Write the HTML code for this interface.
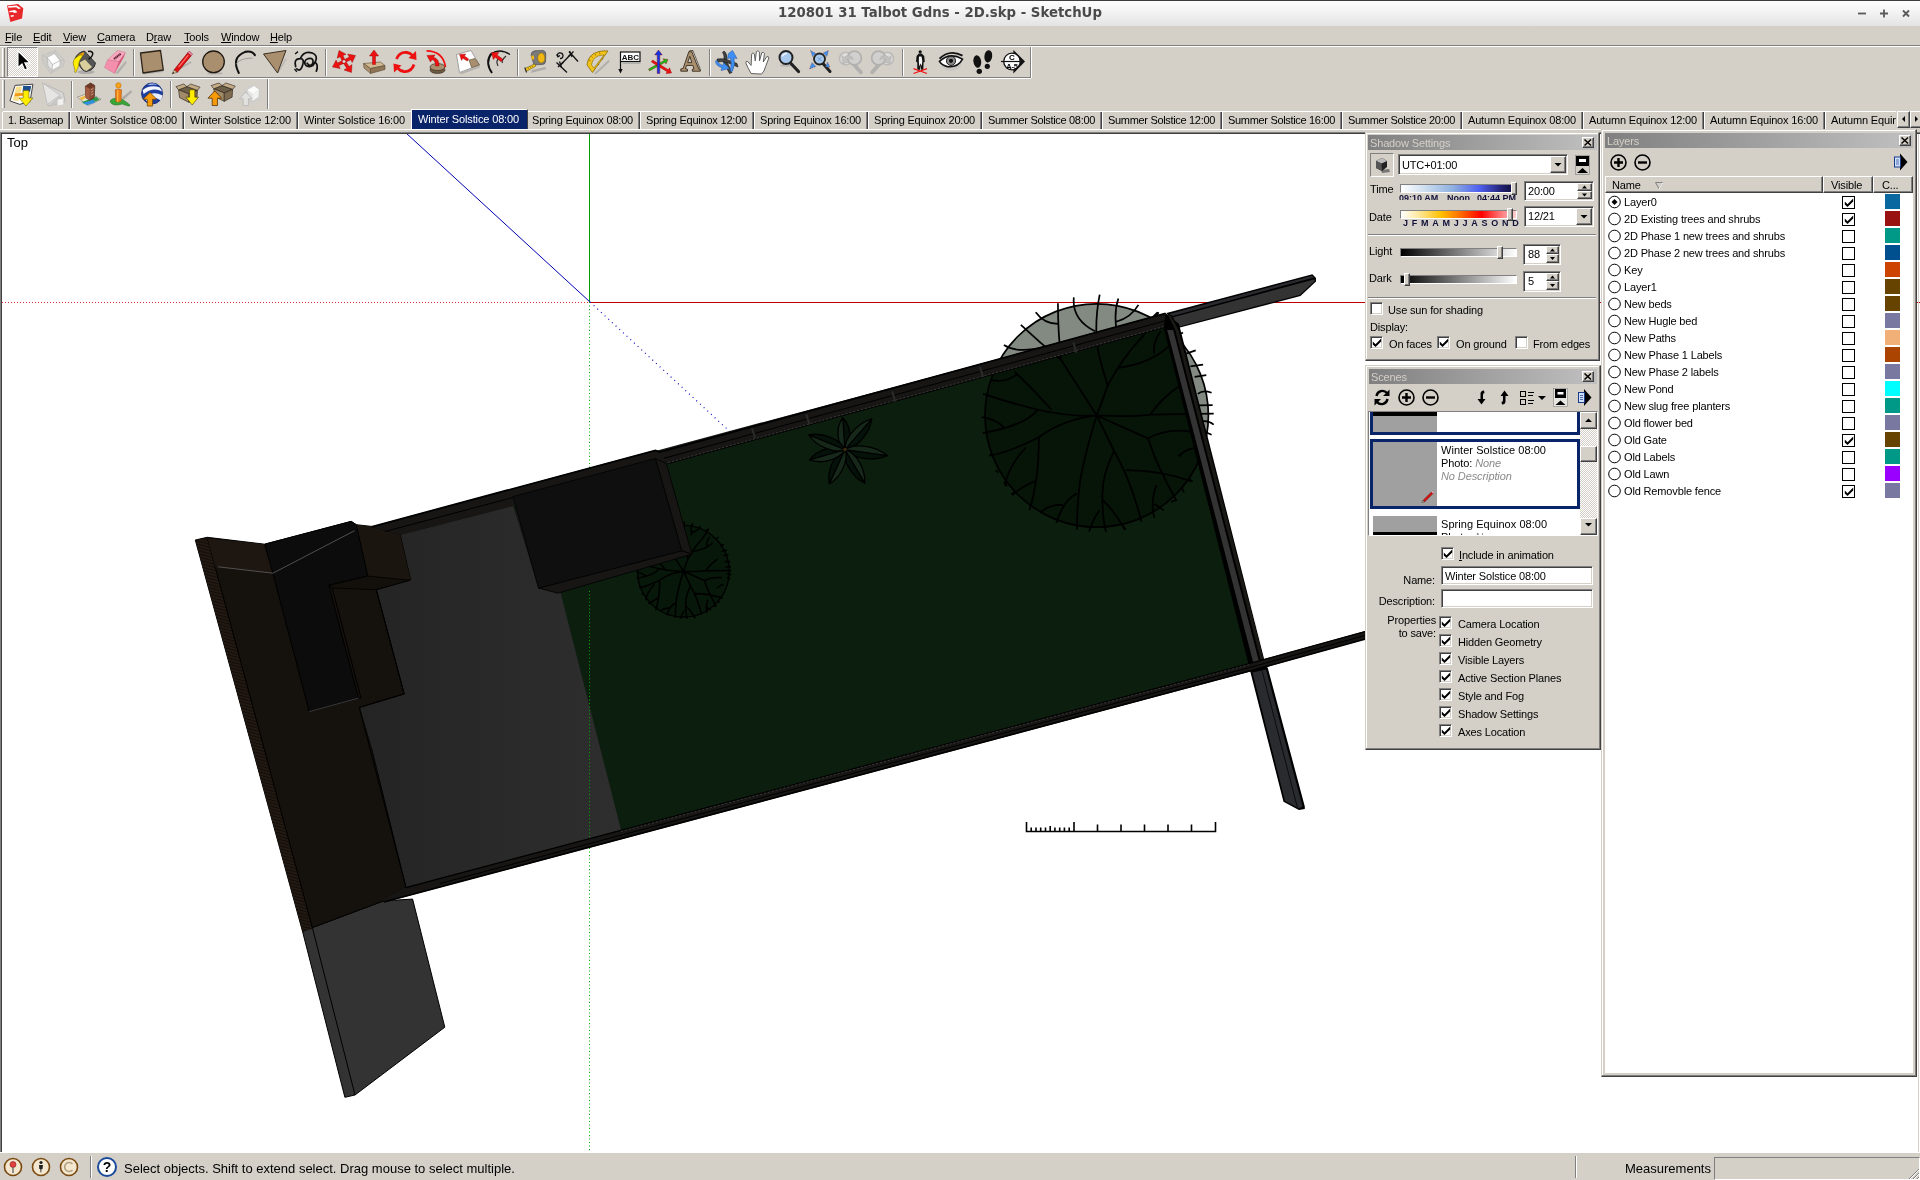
<!DOCTYPE html>
<html lang="en"><head><meta charset="utf-8"><title>120801 31 Talbot Gdns - 2D.skp - SketchUp</title>
<style>

*{box-sizing:border-box;margin:0;padding:0}
html,body{width:1920px;height:1180px;overflow:hidden;background:#d4d0c8}
body{position:relative;font-family:"Liberation Sans",sans-serif;font-size:11px;color:#000;letter-spacing:-0.15px}
#root{position:absolute;left:0;top:0;width:1920px;height:1180px;will-change:transform}
.abs{position:absolute}
.t{position:absolute;white-space:nowrap;line-height:13px;height:13px}
#titlebar{position:absolute;left:0;top:0;width:1920px;height:26px;background:linear-gradient(#fdfdfd 0%,#f4f4f4 40%,#e3e3e3 100%);border-top:1px solid #3c3c3c}
#title{position:absolute;left:0;width:1880px;top:3px;text-align:center;font:bold 13.3px "DejaVu Sans","Liberation Sans",sans-serif;color:#4a4a4a;letter-spacing:0;line-height:18px}
#menubar{position:absolute;left:0;top:26px;width:1920px;height:19px;background:#d4d0c8}
#menubar span{position:absolute;top:5px;font-size:11px;line-height:13px;white-space:nowrap}
#menubar u{text-decoration:underline;text-underline-offset:1px}
.hl{position:absolute;height:1px;left:0;width:1920px}
.tabtxt{position:absolute;top:113px;font-size:11px;line-height:13px;white-space:nowrap}
.tabsep{position:absolute;top:112px;width:3px;height:17px;border-left:1px solid #808080;border-right:1px solid #fff;background:#404040}
.sunken{position:absolute;background:#fff;border:1px solid;border-color:#808080 #fff #fff #808080;box-shadow:inset 1px 1px 0 #404040,inset -1px -1px 0 #d4d0c8}
.raised{position:absolute;background:#d4d0c8;border:1px solid;border-color:#fff #404040 #404040 #fff;box-shadow:inset -1px -1px 0 #808080,inset 1px 1px 0 #d4d0c8}
.btn{position:absolute;background:#d4d0c8;border:1px solid;border-color:#d4d0c8 #404040 #404040 #d4d0c8;box-shadow:inset -1px -1px 0 #808080,inset 1px 1px 0 #fff}
.panel{position:absolute;background:#d4d0c8;border:1px solid;border-color:#d4d0c8 #404040 #404040 #d4d0c8;box-shadow:inset -1px -1px 0 #808080,inset 1px 1px 0 #fff}
.ptitle{position:absolute;height:15px;background:linear-gradient(90deg,#808080,#c0c0c0);color:#d4d0c8;font-size:11px;line-height:17px;overflow:hidden;padding-left:2px;white-space:nowrap}
.pclose{position:absolute;width:12px;height:11px;background:#d4d0c8;border:1px solid;border-color:#fff #404040 #404040 #fff;box-shadow:inset -1px -1px 0 #808080}
.cb{position:absolute;width:13px;height:13px;background:#fff;border:1px solid;border-color:#808080 #fff #fff #808080;box-shadow:inset 1px 1px 0 #404040,inset -1px -1px 0 #d4d0c8}
.cb2{position:absolute;width:13px;height:13px;background:#fff;border:1px solid #000}
.sep{position:absolute;height:2px;border-top:1px solid #808080;border-bottom:1px solid #fff}
.vsep{position:absolute;width:2px;border-left:1px solid #808080;border-right:1px solid #fff}
svg{position:absolute;overflow:visible}
svg text{font-family:"Liberation Sans",sans-serif}

</style></head>
<body>
<div id="root">
<div id="titlebar">
<svg style="left:0;top:-1px" width="30" height="26" viewBox="0 0 30 26"><path d="M7 5.500 L18 4 L23.300 8.300 L22 18.500 L10.300 22 Z" fill="#e8272b"/><path d="M8 6.200 L16.500 5.500 L21 8.200 L18.500 9 L16.300 7.300 L8.300 7.800 Z" fill="#fff"/><path d="M9.300 11 L15 10 L17.500 12.300 L14 13 L13 12 L9.500 12.300 Z" fill="#fff"/><path d="M10.500 15.500 L13.500 15 L14 16.300 L11 17 Z" fill="#fff"/></svg>
<div id="title">120801 31 Talbot Gdns - 2D.skp - SketchUp</div>
<svg style="left:1855px;top:6px" width="60" height="14" viewBox="0 0 60 14"><g stroke="#5a5a5a" stroke-width="1.8" fill="none"><path d="M3 6.5h8"/><path d="M25 6.5h8M29 2.5v8"/><path d="M48 3.5l6 6M54 3.5l-6 6"/></g></svg>
</div>
<div id="menubar">
<span style="left:5px"><u>F</u>ile</span>
<span style="left:33px"><u>E</u>dit</span>
<span style="left:63px"><u>V</u>iew</span>
<span style="left:97px"><u>C</u>amera</span>
<span style="left:146px">D<u>r</u>aw</span>
<span style="left:184px"><u>T</u>ools</span>
<span style="left:221px"><u>W</u>indow</span>
<span style="left:270px"><u>H</u>elp</span>
</div>
<div class="hl" style="top:45px;background:#808080"></div><div class="hl" style="top:46px;background:#fff"></div>
<div class="abs" style="left:2px;top:48px;width:3px;height:29px;border-left:1px solid #fff;border-right:1px solid #808080"></div>
<div class="abs" style="left:2px;top:80px;width:3px;height:28px;border-left:1px solid #fff;border-right:1px solid #808080"></div>
<div class="abs" style="left:7px;top:47px;width:31px;height:30px;border:1px solid;border-color:#808080 #fff #fff #808080;background:#d4d0c8"></div>
<svg style="left:8px;top:48px" width="29" height="28" shape-rendering="crispEdges"><defs><pattern id="dith" width="2" height="2" patternUnits="userSpaceOnUse"><rect width="1" height="1" fill="#fff"/><rect x="1" y="1" width="1" height="1" fill="#fff"/></pattern></defs><rect width="29" height="28" fill="url(#dith)"/></svg>
<svg style="left:10px;top:50px" width="24" height="24" viewBox="0 0 24 24"><g transform="translate(12 12) scale(1.15) translate(-12 -12)"><path d="M8.500 2.500 L8.500 17 L12 13.800 L14.300 19 L16.800 17.900 L14.500 12.800 L19 12.800 Z" fill="#000" stroke="#fff" stroke-width="1"/></g></svg>
<svg style="left:41px;top:50px" width="24" height="24" viewBox="0 0 24 24"><g transform=""><path d="M1 5.500 L14.500 0.500 L23.500 10.500 L22 16.500 L9.500 23.500 L2 12.500 Z" fill="#c6c6c6" opacity=".4"/><path d="M1 5.500 L14.500 0.500 L23.500 10.500 L22 16.500 L9.500 23.500 L2 12.500 Z M1 5.500 L6 7.500 M14.500 0.500 L13.500 3.500 M23.500 10.500 L19 10.500 M9.500 23.500 L11 20.500" fill="none" stroke="#bdbdbd" stroke-width=".8" opacity=".8"/><path d="M6 7.500 L13.500 3.500 L19 10.500 L11.500 14.500 Z" fill="#fff"/><path d="M6 7.500 L11.500 14.500 L11 20.500 L7 16 Z" fill="#e6e6e6"/><path d="M11.500 14.500 L19 10.500 L19 16 L11 20.500 Z" fill="#fbfbfb"/><path d="M6 7.500 L13.500 3.500 L19 10.500 L19 16 L11 20.500 L7 16 Z M6 7.500 L11.500 14.500 L19 10.500 M11.500 14.500 L11 20.500" fill="none" stroke="#b0b0b0" stroke-width=".7"/></g></svg>
<svg style="left:72px;top:50px" width="24" height="24" viewBox="0 0 24 24"><g transform=""><ellipse cx="14" cy="22" rx="8.500" ry="2" fill="#8f8f8f" opacity=".55"/><path d="M3 8.500 Q6 2 12.500 1 L23.500 13 Q23 17.500 19 20 L14 21.500 Q11 21 9 18 Z" fill="#555" stroke="#1e1e1e" stroke-width=".8"/><path d="M7.500 12.500 L13 9.500 L20 17 L14.500 21 Q11 20 9.500 17 Z" fill="#d9cf9c"/><path d="M4 8.500 Q7 3 12 2.200 Q12.500 5 8.500 8 Z" fill="#f0a000"/><path d="M9.500 4.500 Q11 6.500 8.500 9 Q6.500 12 6.500 16 Q5.800 19 4.600 20.500 Q4.400 22.800 3.200 22.600 Q2 22 3 20 Q2 16 1.200 14 Q0.800 10 4 7.500 Q7 5.500 9.500 4.500 Z" fill="#ffee00" stroke="#6a5a00" stroke-width=".5"/><path d="M16 1.500 Q20 0.500 20.800 3.500 Q20.500 7 16.500 9" fill="none" stroke="#111" stroke-width="1.500"/></g></svg>
<svg style="left:103px;top:50px" width="24" height="24" viewBox="0 0 24 24"><g transform=""><path d="M12 23.500 L23 10.500 L23.500 13 L15 23.800 Z" fill="#8f8f8f" opacity=".5"/><path d="M4.500 10 L14.500 0.500 L22.500 2.500 L16 11.500 Z" fill="#f9a8c0" stroke="#c9708a" stroke-width=".5"/><path d="M4.500 10 L16 11.500 L11.500 23.500 L1.500 17.500 Z" fill="#f58fae" stroke="#c9708a" stroke-width=".5"/><path d="M16 11.500 L22.500 2.500 L21 7 L11.500 23.500 Z" fill="#d6597c"/><path d="M11 9 L18 3.500" stroke="#5a2030" stroke-width="2.200" stroke-dasharray="1.300 .5"/></g></svg>
<svg style="left:139px;top:50px" width="24" height="24" viewBox="0 0 24 24"><g transform=""><path d="M4.500 23 L24 20.500 L24.300 22 L5 24.500 Z" fill="#8f8f8f" opacity=".5"/><path d="M1.500 3 L21.500 0.500 L24.300 20 L4 23 Z" fill="#a98f6e" stroke="#2b2218" stroke-width="1.300" stroke-linejoin="round"/></g></svg>
<svg style="left:170px;top:50px" width="24" height="24" viewBox="0 0 24 24"><g transform="translate(12 12) scale(1.15) translate(-12 -12)"><path d="M6 20 L20 12" stroke="#9a9a9a" stroke-width="1.5" opacity=".6"/><path d="M5 19 L17 4 L20 6.5 L8 21 Z" fill="#e01010" stroke="#7a0000" stroke-width=".5"/><path d="M17 4 L18.2 2.6 L21.2 5 L20 6.5 Z" fill="#f48fb1" stroke="#7a0000" stroke-width=".4"/><path d="M5 19 L8 21 L3.3 22.3 Z" fill="#e8c99a" stroke="#333" stroke-width=".4"/><path d="M3.3 22.3 L4.6 20.6 L5.4 21.6 Z" fill="#111"/><path d="M9 16.5 L17.5 6" stroke="#ff7a7a" stroke-width=".9"/></g></svg>
<svg style="left:201px;top:50px" width="24" height="24" viewBox="0 0 24 24"><g transform=""><ellipse cx="14" cy="23.300" rx="8" ry="1.200" fill="#8f8f8f" opacity=".5"/><circle cx="12.500" cy="11.800" r="10.800" fill="#a98f6e" stroke="#1e1810" stroke-width="1.300"/></g></svg>
<svg style="left:232px;top:50px" width="24" height="24" viewBox="0 0 24 24"><g transform="translate(12 12) scale(1.15) translate(-12 -12)"><path d="M7.5 21.5 Q0.5 8 13 3.2 Q19 2 21.5 6" fill="none" stroke="#111" stroke-width="1.8" stroke-linecap="round"/><path d="M5 14 Q8 8.5 19.5 8.5" fill="none" stroke="#8a8a8a" stroke-width="1" opacity=".7"/></g></svg>
<svg style="left:263px;top:50px" width="24" height="24" viewBox="0 0 24 24"><g transform=""><path d="M14.500 22 L23 8 L23.500 9.500 L15.500 23 Z" fill="#8f8f8f" opacity=".45"/><path d="M0.500 4 L23 0.500 L14.500 23 Z" fill="#a98f6e" stroke="#3b2f22" stroke-width="1" stroke-linejoin="round"/></g></svg>
<svg style="left:294px;top:50px" width="24" height="24" viewBox="0 0 24 24"><g transform="translate(12 12) scale(1.15) translate(-12 -12)"><path d="M3 16 Q1 9 7 9 Q11 9 9 15 Q7 21 4 18 M7 9 Q10 2 17 4 Q23 6 20 12 Q17 18 12 15 Q9 11 14 9 Q19 8 18 13 Q16 17 13 13 M20 12 Q23 15 21 20" fill="none" stroke="#111" stroke-width="1.5" stroke-linecap="round"/><path d="M2.5 5 L5 3 M2 18 L4 20.5" stroke="#111" stroke-width="1.2"/></g></svg>
<svg style="left:331px;top:50px" width="24" height="24" viewBox="0 0 24 24"><g transform=""><path d="M14.4 10.9 L11.9 5.6 L15.0 4.2 L8.0 0.5 L6.2 8.2 L9.2 6.8 L11.6 12.1 Z" fill="#ee1111" stroke="#8a0000" stroke-width=".4"/><path d="M13.7 12.8 L19.7 9.7 L21.2 12.6 L24.5 5.5 L16.7 4.1 L18.3 7.1 L12.3 10.2 Z" fill="#ee1111" stroke="#8a0000" stroke-width=".4"/><path d="M12.4 10.1 L6.5 13.0 L5.1 10.0 L1.5 17.0 L9.2 18.6 L7.8 15.7 L13.6 12.9 Z" fill="#ee1111" stroke="#8a0000" stroke-width=".4"/><path d="M11.8 12.3 L15.7 18.2 L13.0 20.0 L20.5 22.5 L21.0 14.6 L18.2 16.5 L14.2 10.7 Z" fill="#ee1111" stroke="#8a0000" stroke-width=".4"/><circle cx="13" cy="11.500" r="1.800" fill="#ddd" stroke="#a00" stroke-width=".5"/></g></svg>
<svg style="left:362px;top:50px" width="24" height="24" viewBox="0 0 24 24"><g transform=""><path d="M1.500 13.500 L18.500 12 L23 15.500 L8.500 18.500 Z" fill="#d1b992" stroke="#5b4a33" stroke-width=".6"/><path d="M1.500 13.500 L8.500 18.500 L8.500 23.500 L2 18 Z" fill="#a98f6e" stroke="#5b4a33" stroke-width=".6"/><path d="M8.500 18.500 L23 15.500 L23 19.500 L8.500 23.500 Z" fill="#8d7556" stroke="#5b4a33" stroke-width=".6"/><path d="M13.5 14.5 L13.5 6.0 L16.6 6.0 L12.0 0.0 L7.4 6.0 L10.5 6.0 L10.5 14.5 Z" fill="#ee1111" stroke="#8a0000" stroke-width=".4"/></g></svg>
<svg style="left:393px;top:50px" width="24" height="24" viewBox="0 0 24 24"><g transform=""><path d="M3.500 9 Q6.500 1.500 14 2.500 Q17.500 3 19.500 5.500" fill="none" stroke="#ee1111" stroke-width="2.800"/><path d="M23 1 L23.500 10 L15.500 8 Z" fill="#ee1111"/><path d="M21 14.500 Q18.500 22 11 21.500 Q7 21 4.500 18" fill="none" stroke="#ee1111" stroke-width="2.800"/><path d="M1 22.500 L0.500 13.500 L8.500 15.500 Z" fill="#ee1111"/></g></svg>
<svg style="left:424px;top:50px" width="24" height="24" viewBox="0 0 24 24"><g transform=""><path d="M7 21 L21 19 L22 20.500 L9 23.500 Z" fill="#8f8f8f" opacity=".4"/><ellipse cx="13.500" cy="20" rx="7.500" ry="3.500" fill="#6e5a42" stroke="#2b2218" stroke-width=".6"/><rect x="6" y="17" width="15" height="3" fill="#6e5a42"/><ellipse cx="13.500" cy="17" rx="7.500" ry="3.500" fill="#a98f6e" stroke="#2b2218" stroke-width=".6"/><path d="M11.500 16 Q12 11 8 9.500 L6.500 12 L3 5.500 L11 5 L9.500 7.200 Q15.500 9 15 16 Z" fill="#ee1111" stroke="#8a0000" stroke-width=".4"/><path d="M2.500 0.800 Q19 1 21.500 17" fill="none" stroke="#ee1111" stroke-width="1.700"/></g></svg>
<svg style="left:455px;top:50px" width="24" height="24" viewBox="0 0 24 24"><g transform=""><path d="M5 23 L24.500 16 L24.800 17.500 L6 24.300 Z" fill="#8f8f8f" opacity=".5"/><path d="M1.500 4.500 L16 0.500 L24.500 15 L4.500 22.500 Z" fill="#fff" stroke="#8f8f8f" stroke-width=".8"/><path d="M14 10 L20 8.500 L24.500 15 L16.500 17.500 Z" fill="#a98f6e" stroke="#5b4a33" stroke-width=".6"/><path d="M13.7 8.9 L9.4 6.1 L10.7 4.0 L4.5 4.5 L6.6 10.4 L7.9 8.3 L12.3 11.1 Z" fill="#ee1111" stroke="#8a0000" stroke-width=".4"/></g></svg>
<svg style="left:486px;top:50px" width="24" height="24" viewBox="0 0 24 24"><g transform=""><path d="M6 23 Q-1.500 12 5.500 3.500" fill="none" stroke="#111" stroke-width="2"/><path d="M5.500 3.500 Q14 -2 24 4.500" fill="none" stroke="#111" stroke-width="1.300"/><path d="M12 16 Q9 10.500 14 7.500 M16.500 13 Q15 10.500 20 6" fill="none" stroke="#333" stroke-width="1.200"/><path d="M16.9 9.3 L11.1 4.9 L12.9 2.5 L5.5 2.5 L7.4 9.6 L9.2 7.2 L15.1 11.7 Z" fill="#ee1111" stroke="#8a0000" stroke-width=".4"/></g></svg>
<svg style="left:523px;top:50px" width="24" height="24" viewBox="0 0 24 24"><g transform=""><path d="M9 20 L22 17 L23.500 19 L8 23 Z" fill="#8f8f8f" opacity=".55"/><path d="M8 5 Q8.500 1 12 0.800 L20 0.500 Q22.800 1 22.800 4 L22.500 12 Q22 14.500 19 14.500 L11 14.800 Z" fill="#7a7a7a" stroke="#3a3a3a" stroke-width=".6"/><ellipse cx="18.300" cy="8" rx="3.600" ry="5" fill="#f2b713" stroke="#7a5c00" stroke-width=".5"/><path d="M8.300 5.500 L11 5.800 L11 9.500 L8.600 9.200 Z" fill="#f2b713"/><path d="M11.500 14 L2 18.500 L3 21.500 L13 16 Z" fill="#f6c915" stroke="#5a4400" stroke-width=".5"/><path d="M1.800 17.500 l1.800 5" stroke="#333" stroke-width="1.200"/><path d="M5 17.500 l.6 1.400 M7 16.500 l.6 1.400 M9 15.600 l.6 1.400" stroke="#5a4400" stroke-width=".6"/></g></svg>
<svg style="left:554px;top:50px" width="24" height="24" viewBox="0 0 24 24"><g transform=""><g stroke="#111" stroke-width="1.300" fill="none"><path d="M15 1.500 L24 11.500"/><path d="M2.500 12.500 L13 22.500"/><path d="M7 14.500 L17 4"/><path d="M14.500 6.500 L19.500 1.500 M15.500 1 L18 7"/><path d="M4 17 L9.500 12 M5.500 11.500 L7.500 17.500"/><path d="M4 6.500 Q2.500 4 5 3 Q8.500 2.500 9 5.500 Q9 8.500 6 8.500 M2.500 4.500 L4 6.800 L6 5.500"/></g></g></svg>
<svg style="left:585px;top:50px" width="24" height="24" viewBox="0 0 24 24"><g transform=""><path d="M9 23.500 L24 9.500 L24.300 12 L11 24.300 Z" fill="#8f8f8f" opacity=".5"/><path d="M2 15 Q3 4 14 1.500 Q19 0.500 23 1 L7.500 22.500 Z" fill="#f2c31a" stroke="#8a6a00" stroke-width=".8" stroke-linejoin="round"/><path d="M6.500 15 Q7.500 8.500 13 6 Q16 5 19 5 L9 18 Z" fill="#d4d0c8" stroke="#8a6a00" stroke-width=".6"/><path d="M4 10 l1.600.8 M6.500 6.500 l1.200 1.200 M10 4 l.8 1.400 M14.500 2.500 l.4 1.600 M9 20 l1.200-1 M13 15 l1.200-.800 M17 9.500 l1.200-.8" stroke="#5b4500" stroke-width=".6"/></g></svg>
<svg style="left:616px;top:50px" width="24" height="24" viewBox="0 0 24 24"><g transform=""><path d="M6 12.500 h18.500 v1.500 h-17z" fill="#8f8f8f" opacity=".5"/><rect x="4.500" y="2" width="19.500" height="9.500" fill="#fff" stroke="#111" stroke-width="1.200"/><text x="14.300" y="9.800" font-size="8" font-weight="bold" text-anchor="middle" fill="#111" style="letter-spacing:0">ABC</text><path d="M4.500 11.500 V20" stroke="#111" stroke-width="1.200"/><path d="M2.300 19 L6.700 19 L4.500 23.500 Z" fill="#111"/></g></svg>
<svg style="left:647px;top:50px" width="24" height="24" viewBox="0 0 24 24"><g transform=""><path d="M2.5 20.9 L18.1 12.3 L19.0 14.0 L21.0 9.5 L16.1 8.8 L17.1 10.5 L1.5 19.1 Z" fill="#18c018" stroke="#8a0000" stroke-width=".4"/><path d="M4.4 12.0 L20.1 21.7 L19.0 23.6 L24.5 23.0 L22.5 17.8 L21.4 19.7 L5.6 10.0 Z" fill="#ee1111" stroke="#8a0000" stroke-width=".4"/><path d="M12.8 23.5 L12.8 4.9 L15.3 4.9 L11.5 0.0 L7.7 4.9 L10.2 4.9 L10.2 23.5 Z" fill="#1433e6" stroke="#8a0000" stroke-width=".4"/></g></svg>
<svg style="left:678px;top:50px" width="24" height="24" viewBox="0 0 24 24"><g transform="translate(12 12) scale(1.15) translate(-12 -12)"><path d="M14 21 L22 18 L17 12 Z" fill="#9a9a9a" opacity=".45"/><path d="M4 20 L4 18 L6 17.6 L11 3 L13.5 3 L19.5 18 L21 18.5 L21 20 L14 20 L14 18.3 L15.5 18 L14.5 15 L9 15 L8 18 L9.8 18.3 L9.8 20 Z M10 12.5 L13.6 12.5 L11.8 7 Z" fill="#a98f6e" stroke="#3b2f22" stroke-width=".8" fill-rule="evenodd"/><path d="M11 3 L12 2 L14.5 2 L13.5 3 M19.5 18 L20.5 17 L14.5 2" fill="none" stroke="#3b2f22" stroke-width=".6"/></g></svg>
<svg style="left:715px;top:50px" width="24" height="24" viewBox="0 0 24 24"><g transform=""><path d="M9 1 Q13 4 11.500 11 L17 22.500 L14.500 23.500 L8.500 12 Q10 5 7.500 2.500 Z" fill="#444" stroke="#111" stroke-width=".6"/><path d="M2 9 Q8 8 13 10 L22 13.500 L23 17 L12 12.500 Q7 11 3 12 Z" fill="#444" stroke="#111" stroke-width=".6"/><path d="M13.500 3.500 L17.500 0.500 L22 8.500 L19 8 Q20.500 15 17.500 21 Q15 23 15.500 19 Q17 13 15.500 8 L12.500 8.500 Z" fill="#3f8ff5" stroke="#1f4f9a" stroke-width=".5"/><path d="M1.500 10 Q3 14 8 15.500 L8.500 12.500 L14.500 18.500 L6 20.500 L7 17.800 Q1 16 0.500 11.500 Z" fill="#3f8ff5" stroke="#1f4f9a" stroke-width=".5"/></g></svg>
<svg style="left:746px;top:50px" width="24" height="24" viewBox="0 0 24 24"><g transform="translate(12 12) scale(1.15) translate(-12 -12)"><path d="M6 22 Q3 17 1.5 13 Q1 11 3 11.5 L6 15 L6.5 5 Q7.5 3.3 8.8 5 L9.6 11 L10.6 3 Q12 1.4 13.2 3.2 L13.3 11 L15.3 4 Q16.8 2.8 17.6 4.6 L16.6 12 L19.6 7.4 Q21.2 6.6 21.4 8.6 L18.6 16 Q17.5 20.5 15 22.5 Z" fill="#fff" stroke="#555" stroke-width=".8" stroke-linejoin="round"/></g></svg>
<svg style="left:777px;top:50px" width="24" height="24" viewBox="0 0 24 24"><g transform=""><ellipse cx="9" cy="15.500" rx="6" ry="1.500" fill="#8f8f8f" opacity=".4"/><path d="M13.500 13 L21.500 21.500" stroke="#222" stroke-width="3.200" stroke-linecap="round"/><circle cx="9" cy="7.500" r="6.500" fill="#a9c9ec" stroke="#222" stroke-width="2"/><path d="M5 6.500 Q6.500 3.500 10 3.500" fill="none" stroke="#e8f2ff" stroke-width="1.400"/></g></svg>
<svg style="left:808px;top:50px" width="24" height="24" viewBox="0 0 24 24"><g transform=""><path d="M15 13.500 L22 21.500" stroke="#222" stroke-width="3" stroke-linecap="round"/><circle cx="11.500" cy="9" r="5.500" fill="#a9c9ec" stroke="#222" stroke-width="1.800"/><path d="M9.500 7 L13.500 11 M13.500 7 L9.500 11" stroke="#6a8fc4" stroke-width=".8"/><path d="M2.500 0.500 L8 3.500 L4.500 6.500 Z M20.500 0.500 L19 6.500 L15 3 Z M1.500 19 L4 12.500 L8 16.500 Z M22 17 L17.500 17 L19.500 12 Z" fill="#3f8fea" stroke="#8a2a2a" stroke-width=".5" stroke-dasharray="1 1"/></g></svg>
<svg style="left:839px;top:50px" width="24" height="24" viewBox="0 0 24 24"><g transform="translate(12 12) scale(1.15) translate(-12 -12)"><g opacity=".75"><path d="M14.5 14 L20.5 21" stroke="#a7a7a7" stroke-width="3.4" stroke-linecap="round"/><circle cx="7.5" cy="9" r="5.5" fill="#e3e3e3" stroke="#b3b3b3" stroke-width="1.4"/><circle cx="15" cy="8.5" r="6" fill="#d0d0d0" stroke="#a7a7a7" stroke-width="1.5"/><path d="M5 13.5 L10.5 12 L8.5 9.8 Q11 8 14 10 L12.5 7 Q8.5 5.5 6 8 L4 6.5 Z" fill="#bcbcbc" stroke="#9c9c9c" stroke-width=".4"/></g></g></svg>
<svg style="left:870px;top:50px" width="24" height="24" viewBox="0 0 24 24"><g transform="translate(12 12) scale(1.15) translate(-12 -12)"><g opacity=".75"><path d="M9.5 14 L3.5 21" stroke="#a7a7a7" stroke-width="3.4" stroke-linecap="round"/><circle cx="16.5" cy="9" r="5.5" fill="#e3e3e3" stroke="#b3b3b3" stroke-width="1.4"/><circle cx="9" cy="8.5" r="6" fill="#d0d0d0" stroke="#a7a7a7" stroke-width="1.5"/><path d="M19 13.5 L13.5 12 L15.5 9.8 Q13 8 10 10 L11.5 7 Q15.5 5.5 18 8 L20 6.5 Z" fill="#bcbcbc" stroke="#9c9c9c" stroke-width=".4"/></g></g></svg>
<svg style="left:908px;top:50px" width="24" height="24" viewBox="0 0 24 24"><g transform=""><circle cx="12.200" cy="1.800" r="1.600" fill="#111"/><path d="M10.800 3.600 L13.600 3.600 L16.200 6 L16.800 12 L15.600 12.300 L15.300 19.800 L13 19.800 L12.500 15 L12 19.800 L9.300 19.800 L9.300 12.500 L8 11.500 L8.600 6 Z" fill="#111"/><path d="M11 6.500 L13.500 6.500 L14.300 11 L13.800 16 L12.600 13.500 L11.300 16.500 L10.800 11 Z" fill="#f4f4f4"/><path d="M5.500 18.700 L19 23.500 M19 18.700 L5.500 23.500" stroke="#ee1111" stroke-width="1.300"/></g></svg>
<svg style="left:939px;top:50px" width="24" height="24" viewBox="0 0 24 24"><g transform="translate(12 12) scale(1.15) translate(-12 -12)"><ellipse cx="12" cy="13" rx="9" ry="6.5" fill="#bbb" opacity=".5"/><path d="M2 11.5 Q11 3 22 9.5 Q18 17 9 16 Q4 15 2 11.5 Z" fill="#fff" stroke="#111" stroke-width="1.4"/><circle cx="12" cy="11" r="4" fill="#8a8a8a" stroke="#111" stroke-width=".8"/><circle cx="12" cy="11" r="1.8" fill="#111"/><path d="M2 9 Q11 0.5 22 6.5" fill="none" stroke="#111" stroke-width="1.6"/></g></svg>
<svg style="left:970px;top:50px" width="24" height="24" viewBox="0 0 24 24"><g transform=""><ellipse cx="18.300" cy="6.300" rx="3.900" ry="6.200" transform="rotate(8 18.300 6.300)" fill="#111"/><ellipse cx="17.300" cy="16.300" rx="2.600" ry="2.600" fill="#111"/><ellipse cx="7.300" cy="11.500" rx="3.900" ry="6.400" transform="rotate(-8 7.300 11.500)" fill="#111"/><ellipse cx="9.300" cy="21.300" rx="2.700" ry="2.600" fill="#111"/></g></svg>
<svg style="left:1001px;top:50px" width="24" height="24" viewBox="0 0 24 24"><g transform=""><path d="M12.400 0 L24 11.500 L12.400 23.500 Z" fill="#111"/><circle cx="11" cy="11.500" r="8.300" fill="#fff" stroke="#111" stroke-width="1.300"/><path d="M0 11.500 H19.500" stroke="#111" stroke-width="1.200"/><text x="11" y="10" font-size="8" font-weight="bold" text-anchor="middle" fill="#000" style="letter-spacing:0">C</text><text x="11" y="18.900" font-size="7.500" font-weight="bold" text-anchor="middle" fill="#000" style="letter-spacing:-.2px">A-5</text></g></svg>
<div class="vsep" style="left:133px;top:49px;height:27px"></div>
<div class="vsep" style="left:325px;top:49px;height:27px"></div>
<div class="vsep" style="left:517px;top:49px;height:27px"></div>
<div class="vsep" style="left:709px;top:49px;height:27px"></div>
<div class="vsep" style="left:902px;top:49px;height:27px"></div>
<div class="abs" style="left:0;top:77px;width:1031px;height:2px;border-top:1px solid #808080;border-bottom:1px solid #fff"></div>
<div class="abs" style="left:1030px;top:47px;width:2px;height:31px;border-left:1px solid #808080;border-right:1px solid #fff"></div>
<svg style="left:10px;top:82px" width="24" height="24" viewBox="0 0 24 24"><g transform="translate(12 12) scale(1.15) translate(-12 -12)"><path d="M1.5 18 L6 4.5 L21.5 3.5 L19 18.5 L10 21 Z" fill="#fdfdfd" stroke="#333" stroke-width=".8"/><path d="M7 6 L12 5.5 L9 18 L4 17.5 Z" fill="#f6dc7a" opacity=".9"/><path d="M13 5 L20 5 L19 10 L12.5 10 Z" fill="#1f4f8a"/><path d="M6 11.5 L13 11 L13 13.5 L5.5 14 Z" fill="#f29a1a"/><path d="M13 9 L18 9 L18 15.5 L21.5 15.5 L15.5 22.5 L9.5 15.5 L13 15.5 Z" fill="#ffee00" stroke="#6a5a00" stroke-width=".5"/></g></svg>
<svg style="left:41px;top:82px" width="24" height="24" viewBox="0 0 24 24"><g transform="translate(12 12) scale(1.15) translate(-12 -12)"><g opacity=".85"><path d="M3 2.5 L21 11 L22.5 19 L8 22.5 Z" fill="#d9d9d9" stroke="#aaa" stroke-width=".7"/><path d="M3 2.5 L7 21 L18 13 Z" fill="#e9e9e9" stroke="#b5b5b5" stroke-width=".6"/><path d="M8 22.5 L18 13 L22.5 19 Z" fill="#c6c6c6"/><path d="M16 17 L21 16 L21 21 L16 22 Z" fill="#f7f7f7"/></g></g></svg>
<svg style="left:77px;top:82px" width="24" height="24" viewBox="0 0 24 24"><g transform="translate(12 12) scale(1.05) translate(-12 -12)"><path d="M1 15 L12 11 L23.5 17 L11 23 Z" fill="#f3ead2" stroke="#777" stroke-width=".6"/><path d="M5 19.5 L19 14.5 L22 17.5 L10 22.5 Z" fill="#2d9a4a"/><path d="M6 20.5 L16 17.5 L18 20 L10.5 22.5 Z" fill="#2f8fe0"/><path d="M3 15.5 L8 13.5 L9 16 L5 18 Z" fill="#f2b84a"/><path d="M8.5 4.5 L13.5 1.5 L17.5 4 L17 15.5 L12.5 18 L9 15.5 Z" fill="#8a4a34" stroke="#3b1f14" stroke-width=".6"/><path d="M8.5 4.5 L12.8 7 L12.5 18 L9 15.5 Z" fill="#a35c42"/><path d="M8.5 4.5 L13.5 1.5 L17.5 4 L12.8 7 Z" fill="#6e3826"/><path d="M13.8 8 l2.4-1.3 M13.8 10.5 l2.4-1.3 M13.8 13 l2.4-1.3" stroke="#d9b9a0" stroke-width=".7"/></g></svg>
<svg style="left:108px;top:82px" width="24" height="24" viewBox="0 0 24 24"><g transform="translate(12 12) scale(1.05) translate(-12 -12)"><path d="M13 16 L22.5 8.5 L23.5 10 L15 18 Z" fill="#8a8a8a" opacity=".55"/><path d="M3 18 Q6 15 11 16.5 Q15 17 17 19 L21 22 Q22 23.5 20 23.5 L14 21.5 Q8 23.5 4.5 21.5 Q2 20 3 18 Z" fill="#3aa63a" stroke="#1f6a1f" stroke-width=".5"/><circle cx="10.5" cy="3.8" r="2.6" fill="#f7a21a" stroke="#a8600a" stroke-width=".4"/><path d="M7.5 8 Q10.5 6.5 13.5 8 L13 19 Q10.5 20.5 8 19 Z" fill="#ee7f16" stroke="#a8500a" stroke-width=".5"/><path d="M9.5 8 L10.5 8 L10.2 19.5 L9.3 19.5 Z" fill="#ffc24a"/></g></svg>
<svg style="left:139px;top:82px" width="24" height="24" viewBox="0 0 24 24"><g transform="translate(12 12) scale(1.05) translate(-12 -12)"><circle cx="13" cy="11.5" r="10" fill="#1f3fa0"/><circle cx="13" cy="11.5" r="10" fill="none" stroke="#0f2470" stroke-width=".8"/><path d="M4 8.5 Q10 3 20 5.5 Q22 7.5 22.5 9.5 Q14 5 5 12 Z" fill="#f3f6ff"/><path d="M6 16 Q13 8 23 13.5 Q22.5 16.5 21 18 Q14 13 8 19 Z" fill="#e9efff"/><path d="M8.5 3.5 Q13 1 18 3 Q13 2.5 8.5 3.5 Z" fill="#cfd9ff"/><path d="M8.5 23.5 L8.5 17 L4.5 17 L11 10.5 L17.5 17 L13.5 17 L13.5 23.5 Z" fill="#f79a0a" stroke="#6a3a00" stroke-width=".7"/></g></svg>
<svg style="left:176px;top:82px" width="24" height="24" viewBox="0 0 24 24"><g transform="translate(12 12) scale(1.05) translate(-12 -12)"><path d="M3 8 L11 5 L21 8.5 L13 12 Z" fill="#6e5f49" stroke="#2b2218" stroke-width=".6"/><path d="M3 8 L13 12 L13 20 L4 15.5 Z" fill="#a08a68" stroke="#2b2218" stroke-width=".6"/><path d="M13 12 L21 8.5 L20.5 16 L13 20 Z" fill="#7f6c50" stroke="#2b2218" stroke-width=".6"/><path d="M3 8 L0.5 5 L8 2.5 L11 5 Z M21 8.5 L23.5 5.5 L14.5 2.5 L11 5 Z" fill="#c4ad86" stroke="#2b2218" stroke-width=".6"/><path d="M13.5 8 L18.5 8 L18.5 15 L22 15 L16 22.5 L10 15 L13.5 15 Z" fill="#ffee00" stroke="#4a4000" stroke-width=".6"/></g></svg>
<svg style="left:207px;top:82px" width="24" height="24" viewBox="0 0 24 24"><g transform="translate(12 12) scale(1.05) translate(-12 -12)"><g transform="translate(4 -1)"><path d="M3 8 L11 5 L21 8.5 L13 12 Z" fill="#6e5f49" stroke="#2b2218" stroke-width=".6"/><path d="M3 8 L13 12 L13 20 L4 15.5 Z" fill="#a08a68" stroke="#2b2218" stroke-width=".6"/><path d="M13 12 L21 8.5 L20.5 16 L13 20 Z" fill="#7f6c50" stroke="#2b2218" stroke-width=".6"/><path d="M3 8 L0.5 5 L8 2.5 L11 5 Z M21 8.5 L23.5 5.5 L14.5 2.5 L11 5 Z" fill="#c4ad86" stroke="#2b2218" stroke-width=".6"/></g><path d="M5.5 23 L5.5 16 L1.5 16 L8 9 L14.5 16 L10.5 16 L10.5 23 Z" fill="#f79a0a" stroke="#4a2a00" stroke-width=".7"/></g></svg>
<svg style="left:238px;top:82px" width="24" height="24" viewBox="0 0 24 24"><g transform="translate(12 12) scale(1.05) translate(-12 -12)"><g opacity=".9"><path d="M5 9 L15 2 L23 8 L22 17 L12 22 Z" fill="#cfcfcf" opacity=".5"/><path d="M9 8 L16 4 L21 8 L14.5 12 Z" fill="#fff"/><path d="M9 8 L14.5 12 L14.5 19 L9.5 15.5 Z" fill="#e6e6e6"/><path d="M14.5 12 L21 8 L20.5 15 L14.5 19 Z" fill="#f6f6f6"/><path d="M9 8 L16 4 L21 8 L20.5 15 L14.5 19 L9.5 15.5 Z" fill="none" stroke="#bdbdbd" stroke-width=".6"/><path d="M5.5 23 L5.5 16.5 L2 16.5 L8 10 L14 16.5 L10.5 16.5 L10.5 23 Z" fill="#e3e3e3" stroke="#b0b0b0" stroke-width=".7"/></g></g></svg>
<div class="vsep" style="left:71px;top:81px;height:27px"></div>
<div class="vsep" style="left:170px;top:81px;height:27px"></div>
<div class="abs" style="left:267px;top:79px;width:2px;height:30px;border-left:1px solid #808080;border-right:1px solid #fff"></div>
<div class="abs" style="left:3px;top:111px;width:1894px;height:1px;background:#fff"></div>
<div class="abs" style="left:2px;top:112px;width:1px;height:17px;background:#fff"></div>
<div class="abs" style="left:0;top:129px;width:1601px;height:1px;background:#fff"></div>
<div class="abs" style="left:411px;top:109px;width:117px;height:20px;background:#0a246a;border-top:1px solid #fff;border-left:1px solid #fff;border-right:1px solid #404040"></div>
<div class="tabtxt" style="left:8px;top:114px;color:#000;letter-spacing:-0.37px">1. Basemap</div>
<div class="tabsep" style="left:68px"></div>
<div class="tabtxt" style="left:76px;top:114px;color:#000;letter-spacing:-0.14px">Winter Solstice 08:00</div>
<div class="tabsep" style="left:182px"></div>
<div class="tabtxt" style="left:190px;top:114px;color:#000;letter-spacing:-0.14px">Winter Solstice 12:00</div>
<div class="tabsep" style="left:296px"></div>
<div class="tabtxt" style="left:304px;top:114px;color:#000;letter-spacing:-0.14px">Winter Solstice 16:00</div>
<div class="tabtxt" style="left:418px;top:113px;color:#fff;letter-spacing:-0.14px">Winter Solstice 08:00</div>
<div class="tabtxt" style="left:532px;top:114px;color:#000;letter-spacing:-0.21px">Spring Equinox 08:00</div>
<div class="tabsep" style="left:638px"></div>
<div class="tabtxt" style="left:646px;top:114px;color:#000;letter-spacing:-0.21px">Spring Equinox 12:00</div>
<div class="tabsep" style="left:752px"></div>
<div class="tabtxt" style="left:760px;top:114px;color:#000;letter-spacing:-0.21px">Spring Equinox 16:00</div>
<div class="tabsep" style="left:866px"></div>
<div class="tabtxt" style="left:874px;top:114px;color:#000;letter-spacing:-0.21px">Spring Equinox 20:00</div>
<div class="tabsep" style="left:980px"></div>
<div class="tabtxt" style="left:988px;top:114px;color:#000;letter-spacing:-0.32px">Summer Solstice 08:00</div>
<div class="tabsep" style="left:1100px"></div>
<div class="tabtxt" style="left:1108px;top:114px;color:#000;letter-spacing:-0.32px">Summer Solstice 12:00</div>
<div class="tabsep" style="left:1220px"></div>
<div class="tabtxt" style="left:1228px;top:114px;color:#000;letter-spacing:-0.32px">Summer Solstice 16:00</div>
<div class="tabsep" style="left:1340px"></div>
<div class="tabtxt" style="left:1348px;top:114px;color:#000;letter-spacing:-0.32px">Summer Solstice 20:00</div>
<div class="tabsep" style="left:1460px"></div>
<div class="tabtxt" style="left:1468px;top:114px;color:#000;letter-spacing:-0.165px">Autumn Equinox 08:00</div>
<div class="tabsep" style="left:1581px"></div>
<div class="tabtxt" style="left:1589px;top:114px;color:#000;letter-spacing:-0.165px">Autumn Equinox 12:00</div>
<div class="tabsep" style="left:1702px"></div>
<div class="tabtxt" style="left:1710px;top:114px;color:#000;letter-spacing:-0.165px">Autumn Equinox 16:00</div>
<div class="tabsep" style="left:1823px"></div>
<div class="tabtxt" style="left:1831px;top:114px;color:#000;letter-spacing:-0.165px;width:70px;overflow:hidden">Autumn Equinox 20:00</div>
<div class="abs" style="left:1896px;top:110px;width:24px;height:21px;background:#d4d0c8"></div>
<div class="raised" style="left:1897px;top:111px;width:13px;height:17px"></div>
<div class="raised" style="left:1910px;top:111px;width:13px;height:17px"></div>
<svg style="left:1897px;top:111px" width="23" height="17"><path d="M8 5v6l-3-3z" fill="#000"/><path d="M18 5v6l3-3z" fill="#000"/></svg>
<svg id="view" style="left:0;top:0" width="1920" height="1180" viewBox="0 0 1920 1180">
<defs><clipPath id="vp"><rect x="2" y="134" width="1918" height="1018"/></clipPath>
<clipPath id="lawnclip"><polygon points="513.0,506.0 655.4,458.5 668.1,463.6 1163.7,328.0 1250.2,662.9 621.0,830.0 560.0,590.7"/></clipPath>
<linearGradient id="pav" x1="0" y1="0" x2="1" y2="0"><stop offset="0" stop-color="#242424"/><stop offset="1" stop-color="#2e2e2e"/></linearGradient>
<pattern id="brick" width="4" height="3" patternUnits="userSpaceOnUse" patternTransform="rotate(15)"><rect width="4" height="3" fill="#221912"/><rect width="4" height="1" fill="#120d09"/></pattern>
</defs>
<rect x="0" y="132" width="1920" height="1021" fill="#fff"/>
<g clip-path="url(#vp)">
<path d="M590 302.5 H1920" stroke="#c00000" stroke-width="1"/>
<path d="M2 302.5 H590" stroke="#e03030" stroke-width="1" stroke-dasharray="1 2"/>
<path d="M589.5 133 V302" stroke="#00a000" stroke-width="1"/>
<path d="M589.5 302 V1152" stroke="#00b000" stroke-width="1" stroke-dasharray="1 2.5"/>
<path d="M590 302 L406 133" stroke="#0000b4" stroke-width="1"/>
<path d="M590 302 L740 441" stroke="#1010c0" stroke-width="1.2" stroke-dasharray="1 4"/>
<circle cx="1096.7" cy="415.5" r="111.7" fill="#828a82"/>
<polygon points="371.5,527.0 655.4,451.0 1165.6,314.0 1250.2,665.0 405.9,889.0 372.0,750.0" fill="#181a18"/>
<polygon points="513.0,506.0 655.4,458.5 668.1,463.6 1163.7,328.0 1250.2,662.9 621.0,830.0 560.0,590.7" fill="#0c1f0e"/>
<circle cx="1096.7" cy="415.5" r="111.7" fill="#061508" clip-path="url(#lawnclip)"/>
<circle cx="1096.7" cy="415.5" r="111.7" fill="none" stroke="#000" stroke-width="1.700"/>
<g transform="translate(970 290) scale(0.21191)"><path d="M598 592 L430 330 Q415 200 415 62 M598 592 Q640 480 650 450 Q610 330 598 250 Q590 130 612 22 M650 450 Q720 320 800 235 Q850 180 890 105 M700 368 Q850 345 935 268 M598 592 Q750 600 850 588 L1150 583 M850 588 Q910 505 990 452 M598 592 Q480 600 320 565 Q180 530 62 490 M320 565 Q260 640 60 675 M55 600 Q130 610 165 655 M598 592 Q440 610 325 695 Q200 760 95 782 M325 695 Q325 900 280 1040 M265 742 Q180 830 165 925 M310 900 Q240 930 200 968 M598 592 Q540 780 520 900 Q505 1000 505 1130 M598 592 L680 760 Q620 880 625 980 Q625 1080 642 1142 M680 760 Q760 900 810 1095 M598 592 L840 700 Q880 830 975 995 M735 850 Q900 850 1050 905 M840 700 Q930 650 1040 668 M985 785 Q1010 755 1060 745 M880 920 Q850 1000 870 1075 M870 1010 L915 1040 M505 960 Q440 990 408 1100 M440 1015 Q380 1010 330 1050 M625 990 Q680 1040 730 1130 M612 1040 Q580 1080 562 1140 M210 385 Q300 470 385 565 M100 425 Q170 440 225 395 M430 330 Q330 250 240 165 M310 105 Q350 160 415 160 M490 35 Q480 140 590 195 M700 40 Q680 100 690 180 M690 150 Q760 130 795 70 M160 260 Q220 300 350 270 M870 300 Q860 250 900 195 M1020 300 L1065 285 M1040 360 L1100 352 M1060 410 L1115 402 M1075 490 Q1100 470 1140 485 M1080 545 L1145 543 M1095 620 Q1125 615 1150 635 M1100 665 L1140 683 M980 215 L1005 200 M120 850 L135 862 M90 780 L110 775 M160 905 L175 925 M195 965 L215 950 M120 330 L140 340 M860 130 L885 105 M950 1000 L975 990 M1000 935 L1010 955 M1035 890 L1050 905 M720 1110 L735 1130" fill="none" stroke="#000" stroke-width="8.2" stroke-linecap="butt"/></g>
<circle cx="683.4" cy="571.2" r="45.8" fill="#071709" stroke="#000" stroke-width="1.3"/>
<g transform="translate(631.43 519.75) scale(0.08691)"><path d="M598 592 L430 330 Q415 200 415 62 M598 592 Q640 480 650 450 Q610 330 598 250 Q590 130 612 22 M650 450 Q720 320 800 235 Q850 180 890 105 M700 368 Q850 345 935 268 M598 592 Q750 600 850 588 L1150 583 M850 588 Q910 505 990 452 M598 592 Q480 600 320 565 Q180 530 62 490 M320 565 Q260 640 60 675 M55 600 Q130 610 165 655 M598 592 Q440 610 325 695 Q200 760 95 782 M325 695 Q325 900 280 1040 M265 742 Q180 830 165 925 M310 900 Q240 930 200 968 M598 592 Q540 780 520 900 Q505 1000 505 1130 M598 592 L680 760 Q620 880 625 980 Q625 1080 642 1142 M680 760 Q760 900 810 1095 M598 592 L840 700 Q880 830 975 995 M735 850 Q900 850 1050 905 M840 700 Q930 650 1040 668 M985 785 Q1010 755 1060 745 M880 920 Q850 1000 870 1075 M870 1010 L915 1040 M505 960 Q440 990 408 1100 M440 1015 Q380 1010 330 1050 M625 990 Q680 1040 730 1130 M612 1040 Q580 1080 562 1140 M210 385 Q300 470 385 565 M100 425 Q170 440 225 395 M430 330 Q330 250 240 165 M310 105 Q350 160 415 160 M490 35 Q480 140 590 195 M700 40 Q680 100 690 180 M690 150 Q760 130 795 70 M160 260 Q220 300 350 270 M870 300 Q860 250 900 195 M1020 300 L1065 285 M1040 360 L1100 352 M1060 410 L1115 402 M1075 490 Q1100 470 1140 485 M1080 545 L1145 543 M1095 620 Q1125 615 1150 635 M1100 665 L1140 683 M980 215 L1005 200 M120 850 L135 862 M90 780 L110 775 M160 905 L175 925 M195 965 L215 950 M120 330 L140 340 M860 130 L885 105 M950 1000 L975 990 M1000 935 L1010 955 M1035 890 L1050 905 M720 1110 L735 1130" fill="none" stroke="#000" stroke-width="17.3" stroke-linecap="butt"/></g>
<g transform="translate(845 449.6) rotate(-94)"><path d="M0 0 C6.4 -8 22.4 -8 32 0 Z" fill="#16281a"/><path d="M0 0 C6.4 8 22.4 8 32 0 Z" fill="#04120a"/><path d="M0 0 C6.4 -8 22.4 -8 32 0 C22.4 8 6.4 8 0 0 Z M0 0 L32 0" fill="none" stroke="#000" stroke-width="1.3"/></g>
<g transform="translate(845 449.6) rotate(-49)"><path d="M0 0 C8.2 -8 28.6 -8 40.8 0 Z" fill="#16281a"/><path d="M0 0 C8.2 8 28.6 8 40.8 0 Z" fill="#04120a"/><path d="M0 0 C8.2 -8 28.6 -8 40.8 0 C28.6 8 8.2 8 0 0 Z M0 0 L40.8 0" fill="none" stroke="#000" stroke-width="1.3"/></g>
<g transform="translate(845 449.6) rotate(8)"><path d="M0 0 C8.5 -8 29.9 -8 42.7 0 Z" fill="#16281a"/><path d="M0 0 C8.5 8 29.9 8 42.7 0 Z" fill="#04120a"/><path d="M0 0 C8.5 -8 29.9 -8 42.7 0 C29.9 8 8.5 8 0 0 Z M0 0 L42.7 0" fill="none" stroke="#000" stroke-width="1.3"/></g>
<g transform="translate(845 449.6) rotate(59.5)"><path d="M0 0 C7.8 -8 27.3 -8 39 0 Z" fill="#16281a"/><path d="M0 0 C7.8 8 27.3 8 39 0 Z" fill="#04120a"/><path d="M0 0 C7.8 -8 27.3 -8 39 0 C27.3 8 7.8 8 0 0 Z M0 0 L39 0" fill="none" stroke="#000" stroke-width="1.3"/></g>
<g transform="translate(845 449.6) rotate(114.5)"><path d="M0 0 C7.6 -8 26.5 -8 37.8 0 Z" fill="#16281a"/><path d="M0 0 C7.6 8 26.5 8 37.8 0 Z" fill="#04120a"/><path d="M0 0 C7.6 -8 26.5 -8 37.8 0 C26.5 8 7.6 8 0 0 Z M0 0 L37.8 0" fill="none" stroke="#000" stroke-width="1.3"/></g>
<g transform="translate(845 449.6) rotate(163.7)"><path d="M0 0 C7.4 -8 25.9 -8 37 0 Z" fill="#16281a"/><path d="M0 0 C7.4 8 25.9 8 37 0 Z" fill="#04120a"/><path d="M0 0 C7.4 -8 25.9 -8 37 0 C25.9 8 7.4 8 0 0 Z M0 0 L37 0" fill="none" stroke="#000" stroke-width="1.3"/></g>
<g transform="translate(845 449.6) rotate(-158)"><path d="M0 0 C7.8 -8 27.3 -8 39 0 Z" fill="#16281a"/><path d="M0 0 C7.8 8 27.3 8 39 0 Z" fill="#04120a"/><path d="M0 0 C7.8 -8 27.3 -8 39 0 C27.3 8 7.8 8 0 0 Z M0 0 L39 0" fill="none" stroke="#000" stroke-width="1.3"/></g>
<circle cx="845" cy="449.6" r="1.8" fill="#3a2a10"/>
<polygon points="400.3,534.9 513.0,506.0 538.5,588.1 558.0,593.2 560.0,590.7 621.0,830.0 405.9,887.2 372.0,750.0 359.3,707.5 404.2,693.9 376.3,589.7 410.5,579.8" fill="url(#pav)"/>
<polygon points="302.5,931.3 383.8,900.8 412.6,899.1 444.8,1027.2 355.0,1095.0 344.9,1097.3" fill="#333" stroke="#000" stroke-width="1" stroke-linejoin="round"/>
<path d="M312.7 928.9 L355 1095" stroke="#000" stroke-width="1"/>
<polygon points="195.3,540.0 207.2,537.3 264.7,544.2 351.2,521.4 356.3,524.7 371.5,526.4 400.3,534.9 410.5,579.8 376.3,589.7 404.2,693.9 359.3,707.5 372.0,750.0 405.9,887.2 383.8,900.8 302.5,931.3" fill="#15110c" stroke="#000" stroke-width="1" stroke-linejoin="round"/>
<polygon points="195.3,540.0 207.5,538.5 312.7,928.9 302.5,931.3" fill="url(#brick)"/>
<path d="M207.5 538.5 L312.7 928.9" stroke="#000" stroke-width="1"/>
<polygon points="207.5,538.5 264.7,544.2 272.9,573.2 215.3,567.3" fill="#1e1610"/>
<polygon points="356.3,524.7 371.5,526.4 400.3,534.9 410.5,579.8 367.8,576.1" fill="#1b1510"/>
<polygon points="264.7,544.2 351.2,521.4 356.3,524.7 367.8,576.1 328.8,585.4 358.5,698.1 309.3,711.7 272.9,573.2" fill="#0d0c0d" stroke="#000" stroke-width="1" stroke-linejoin="round"/>
<path d="M218.1 566.8 L272.9 573.2 L354.6 530.7" fill="none" stroke="#505050" stroke-width="1"/>
<polygon points="328.8,585.4 367.8,576.1 410.2,580.3 376.3,589.7 332.2,588.0" fill="#13100b" stroke="#000" stroke-width=".8"/>
<path d="M332.2 588 L361 698.1 M376.3 589.7 L404.2 693.9 L359.3 707.5 L405.9 887.2 M358.5 698.1 L361 698.1" fill="none" stroke="#000" stroke-width="1"/>
<path d="M309.3 711.7 L358.5 698.1" stroke="#4a4a4a" stroke-width=".8"/>
<path d="M589.5 591 V838" stroke="#00a800" stroke-width="1" stroke-dasharray="1 2.5"/>
<polygon points="371.5,526.4 655.4,450.0 659.7,451.7 1165.6,312.9 1167.0,327.0 668.1,463.6 655.4,458.5 513.0,497.5 513.0,506.0 400.3,534.9" fill="#171615"/>
<path d="M371.5 526.8 L655.4 450.4 L659.7 452.1 L1165.6 313.3" fill="none" stroke="#000" stroke-width="1.800"/>
<path d="M385 531.500 L513 497.500 M664 458.300 L1165 320.800" fill="none" stroke="#000" stroke-width="1"/>
<path d="M668.1 463.600 L1164 327.500" fill="none" stroke="#000" stroke-width="1"/>
<path d="M668.1 462.600 L1164 326.500" fill="none" stroke="#3a3a3a" stroke-width="1" stroke-dasharray="2 2"/>
<path d="M752 428 l3 10" stroke="#2c2c2c" stroke-width="2"/>
<path d="M806.4 414.5 l3 10" stroke="#2c2c2c" stroke-width="2"/>
<path d="M892.2 391.5 l3 10" stroke="#2c2c2c" stroke-width="2"/>
<path d="M980 367 l3 10" stroke="#2c2c2c" stroke-width="2"/>
<path d="M1073.4 342.6 l3 10" stroke="#2c2c2c" stroke-width="2"/>
<polygon points="655.4,458.5 666.4,463.6 691.9,554.2 681.7,550.8" fill="#171615" stroke="#000" stroke-width=".8"/>
<polygon points="538.5,588.1 681.7,550.8 691.9,554.2 558.0,593.2" fill="#171615" stroke="#000" stroke-width=".8"/>
<polygon points="513.0,496.6 655.4,458.5 681.7,550.8 538.5,588.1" fill="#0f0f10" stroke="#050505" stroke-width="1" stroke-linejoin="round"/>
<polygon points="1166.5,313.0 1312.4,274.3 1316.0,278.0 1316.0,281.5 1300.5,296.0 1177.0,328.3" fill="#000"/>
<polygon points="1169.0,314.0 1312.0,275.8 1314.0,277.6 1172.8,315.9" fill="#2a2b2f"/>
<polygon points="1173.2,317.3 1314.6,279.2 1314.8,281.0 1300.0,294.7 1177.6,327.0" fill="#333"/>
<polygon points="1163.7,328.2 1165.6,312.9 1179.0,324.0 1264.8,661.8 1268.0,668.8 1304.8,806.5 1304.8,808.9 1298.9,810.0 1283.5,801.7 1250.2,671.2" fill="#000"/>
<polygon points="1167.2,330.0 1173.2,330.0 1259.1,662.0 1253.1,662.0" fill="#333"/>
<polygon points="1168.0,315.0 1171.0,316.0 1178.5,330.0 1264.9,664.0 1261.6,664.0 1175.2,330.0" fill="#1a1916"/>
<polygon points="1252.5,672.5 1266.0,669.5 1302.5,806.5 1298.9,808.5 1285.0,801.0" fill="#2a2b2f"/>
<path d="M1262 670.500 L1297.500 808" stroke="#0c0c0c" stroke-width="1"/>
<path d="M1249.500 600 L1261 644" stroke="#ddd" stroke-width="1" stroke-dasharray="1 2"/>
<polygon points="383.1,899.5 405.9,887.2 1250.2,662.9 1365.4,630.9 1400.0,621.5 1400.0,630.0 1365.4,639.2 1251.4,671.2 383.8,902.5" fill="#171615"/>
<path d="M405.9 887.600 L1250.2 663.300 L1400 621.900" fill="none" stroke="#000" stroke-width="1.200"/>
<path d="M440 883.500 L1250.800 667.200 L1400 625.800" fill="none" stroke="#000" stroke-width="1"/>
<path d="M383.8 902 L1251.400 670.600 L1400 629.500" fill="none" stroke="#000" stroke-width="1.600"/>
<path d="M621 831.500 L1249 664.700" fill="none" stroke="#3a3a3a" stroke-width="1" stroke-dasharray="2 2"/>
<path d="M1026.5 822 V831.5 H1215.5 V822 M1031.2 827.5 V831 M1036.0 827.5 V831 M1040.7 827.5 V831 M1045.5 827.5 V831 M1050.2 827.5 V831 M1054.9 827.5 V831 M1059.7 827.5 V831 M1064.4 827.5 V831 M1069.2 827.5 V831 M1050.2 826 V831 M1074 822 V831 M1097.5 824.5 V831 M1121 824.5 V831 M1144.5 824.5 V831 M1168 824.5 V831 M1191.5 824.5 V831" fill="none" stroke="#000" stroke-width="1.600"/>
</g>
<text x="7" y="147" font-size="13" fill="#000" style="letter-spacing:0">Top</text>
<path d="M0 132.500 H1920" stroke="#808080"/><path d="M1 133.500 H1920" stroke="#404040"/><path d="M0.500 132 V1153" stroke="#808080"/><path d="M1.500 133 V1153" stroke="#404040"/>
<path d="M1918.500 134 V1152" stroke="#d4d0c8"/>
</svg>
<div class="panel" style="left:1365px;top:132px;width:235px;height:229px"></div>
<div class="ptitle" style="left:1368px;top:135px;width:229px">Shadow Settings</div>
<div class="pclose" style="left:1582px;top:137px"><svg style="left:1px;top:1px" width="8" height="7" viewBox="0 0 8 7"><path d="M0.5 0.5 L7 6.5 M7 0.5 L0.5 6.5" stroke="#000" stroke-width="1.5"/></svg></div>
<div class="abs" style="left:1370px;top:153px;width:24px;height:24px;border:1px solid;border-color:#808080 #fff #fff #808080"></div>
<svg style="left:1373px;top:156px" width="18" height="18" viewBox="0 0 18 18"><path d="M8 14 L16 13 L17 16 L9 17 Z" fill="#777"/><path d="M3 5 L9 2 L14 5 L14 11 L9 15 L3 12 Z" fill="#222"/><path d="M3 5 L9 2 L14 5 L8.5 7.5 Z" fill="#bbb"/><path d="M3 5 L8.5 7.5 L9 15 L3 12 Z" fill="#555"/></svg>
<div class="sunken" style="left:1398px;top:154px;width:170px;height:21px"></div>
<div class="t" style="left:1402px;top:159px;">UTC+01:00</div>
<div class="raised" style="left:1550px;top:156px;width:16px;height:17px"></div><svg style="left:1550px;top:156px" width="16" height="17"><path d="M4.5 7.0 h7 l-3.5 3.5z" fill="#000"/></svg>
<svg style="left:1575px;top:155px" width="16" height="21" viewBox="0 0 16 21"><rect x="1" y="1" width="13" height="10" fill="#000"/><rect x="4" y="4" width="7" height="3" fill="#fff"/><path d="M2 18 L13 18 L7.5 13 Z" fill="#000"/><rect x=".5" y=".5" width="14" height="19" fill="none" stroke="#808080" stroke-width=".6"/></svg>
<div class="t" style="left:1370px;top:183px;">Time</div>
<div class="abs" style="left:1400px;top:184px;width:117px;height:9px;border:1px solid;border-color:#808080 #fff #fff #808080;background:linear-gradient(90deg,#fff 0%,#cfe0f0 20%,#8fb0e0 45%,#5060f0 68%,#202070 88%,#0a0a30 100%)"></div>
<div class="raised" style="left:1511px;top:182px;width:6px;height:13px"></div>
<div class="t" style="left:1399px;top:193px;font-size:9px;font-weight:bold;color:#101038;height:7px;line-height:11px;overflow:hidden;letter-spacing:0">09:10 AM</div>
<div class="t" style="left:1447px;top:193px;font-size:9px;font-weight:bold;color:#101038;height:7px;line-height:11px;overflow:hidden;letter-spacing:0">Noon</div>
<div class="t" style="left:1477px;top:193px;font-size:9px;font-weight:bold;color:#101038;height:7px;line-height:11px;overflow:hidden;letter-spacing:0">04:44 PM</div>
<div class="sunken" style="left:1524px;top:181px;width:70px;height:20px"></div>
<div class="t" style="left:1528px;top:185px;">20:00</div>
<div class="raised" style="left:1577px;top:183px;width:15px;height:8px"></div><div class="raised" style="left:1577px;top:191px;width:15px;height:8px"></div><svg style="left:1577px;top:183px" width="15" height="16"><path d="M5.0 5.5 h5 l-2.5 -3z M5.0 10.5 h5 l-2.5 3z" fill="#000"/></svg>
<div class="t" style="left:1369px;top:211px;">Date</div>
<div class="abs" style="left:1400px;top:210px;width:117px;height:9px;border:1px solid;border-color:#808080 #fff #fff #808080;background:linear-gradient(90deg,#fff 0%,#ffe9a0 15%,#ffc000 35%,#ff6a00 52%,#ff0000 70%,#ff8080 88%,#ffd0d0 100%)"></div>
<div class="raised" style="left:1507px;top:208px;width:6px;height:13px"></div>
<div class="t" style="left:1403px;top:219px;font-size:9px;font-weight:bold;color:#101038;height:7px;line-height:9px;overflow:hidden;letter-spacing:3.75px">JFMAMJJASOND</div>
<div class="sunken" style="left:1524px;top:206px;width:70px;height:21px"></div>
<div class="t" style="left:1528px;top:210px;">12/21</div>
<div class="raised" style="left:1576px;top:208px;width:16px;height:17px"></div><svg style="left:1576px;top:208px" width="16" height="17"><path d="M4.5 7.0 h7 l-3.5 3.5z" fill="#000"/></svg>
<div class="sep" style="left:1368px;top:234px;width:228px"></div>
<div class="t" style="left:1369px;top:245px;">Light</div>
<div class="abs" style="left:1400px;top:248px;width:117px;height:9px;border:1px solid;border-color:#808080 #fff #fff #808080;background:linear-gradient(90deg,#000,#fff)"></div>
<div class="raised" style="left:1497px;top:246px;width:6px;height:13px"></div>
<div class="sunken" style="left:1523px;top:244px;width:38px;height:21px"></div>
<div class="t" style="left:1528px;top:248px;">88</div>
<div class="raised" style="left:1546px;top:246px;width:13px;height:8px"></div><div class="raised" style="left:1546px;top:254px;width:13px;height:9px"></div><svg style="left:1546px;top:246px" width="13" height="17"><path d="M4.0 5.5 h5 l-2.5 -3z M4.0 11.0 h5 l-2.5 3z" fill="#000"/></svg>
<div class="t" style="left:1369px;top:272px;">Dark</div>
<div class="abs" style="left:1400px;top:275px;width:117px;height:9px;border:1px solid;border-color:#808080 #fff #fff #808080;background:linear-gradient(90deg,#000,#fff)"></div>
<div class="raised" style="left:1404px;top:273px;width:6px;height:13px"></div>
<div class="sunken" style="left:1523px;top:271px;width:38px;height:21px"></div>
<div class="t" style="left:1528px;top:275px;">5</div>
<div class="raised" style="left:1546px;top:273px;width:13px;height:8px"></div><div class="raised" style="left:1546px;top:281px;width:13px;height:9px"></div><svg style="left:1546px;top:273px" width="13" height="17"><path d="M4.0 5.5 h5 l-2.5 -3z M4.0 11.0 h5 l-2.5 3z" fill="#000"/></svg>
<div class="sep" style="left:1368px;top:297px;width:228px"></div>
<div class="cb" style="left:1370px;top:302px"></div>
<div class="t" style="left:1388px;top:304px;">Use sun for shading</div>
<div class="t" style="left:1370px;top:321px;">Display:</div>
<div class="cb" style="left:1370px;top:336px"><svg style="left:1px;top:1px" width="10" height="10" viewBox="0 0 10 10"><path d="M0.800 3.600 L3.500 6.300 L9.200 0.600 L9.200 3.400 L3.500 9.100 L0.800 6.400 Z" fill="#000"/></svg></div>
<div class="t" style="left:1389px;top:338px;">On faces</div>
<div class="cb" style="left:1437px;top:336px"><svg style="left:1px;top:1px" width="10" height="10" viewBox="0 0 10 10"><path d="M0.800 3.600 L3.500 6.300 L9.200 0.600 L9.200 3.400 L3.500 9.100 L0.800 6.400 Z" fill="#000"/></svg></div>
<div class="t" style="left:1456px;top:338px;">On ground</div>
<div class="cb" style="left:1515px;top:336px"></div>
<div class="t" style="left:1533px;top:338px;">From edges</div>
<div class="panel" style="left:1365px;top:365px;width:236px;height:385px"></div>
<div class="ptitle" style="left:1369px;top:369px;width:228px">Scenes</div>
<div class="pclose" style="left:1582px;top:371px"><svg style="left:1px;top:1px" width="8" height="7" viewBox="0 0 8 7"><path d="M0.5 0.5 L7 6.5 M7 0.5 L0.5 6.5" stroke="#000" stroke-width="1.5"/></svg></div>
<svg style="left:1372px;top:387px" width="226" height="22" viewBox="1372 387 226 22"><g fill="none" stroke="#000" stroke-width="2.4"><path d="M1376.5 396 A6 6 0 0 1 1387 393"/><path d="M1387.5 399 A6 6 0 0 1 1377 402"/></g><path d="M1389.5 389.5 L1389.5 396 L1383 396 Z M1374.5 405.5 L1374.5 399 L1381 399 Z" fill="#000"/><circle cx="1406.5" cy="397.5" r="7.5" fill="none" stroke="#000" stroke-width="1.6"/><path d="M1402 397.5 h9 M1406.5 393 v9" stroke="#000" stroke-width="2.4"/><circle cx="1430.5" cy="397.5" r="7.5" fill="none" stroke="#000" stroke-width="1.6"/><path d="M1426 397.5 h9" stroke="#000" stroke-width="2.4"/><path d="M1484 390.5 Q1480 390.5 1480.5 395 L1480.5 399 L1477.5 399 L1481.5 404.5 L1485.5 399 L1483 399 L1483 395 Q1483 393 1484.5 393 Z" fill="#000"/><path d="M1502 404.5 Q1506 404.5 1505.5 400 L1505.5 396 L1508.5 396 L1504.5 390.5 L1500.5 396 L1503 396 L1503 400 Q1503 402 1501.5 402 Z" fill="#000"/><g fill="none" stroke="#000" stroke-width="1"><rect x="1520.5" y="391.500" width="5" height="5"/><rect x="1520.500" y="399.500" width="5" height="5"/><path d="M1528 392.5 h6 M1528 395.5 h5 M1528 400.5 h6 M1528 403.5 h5"/></g><path d="M1538 396 h8 l-4 4z" fill="#000"/><rect x="1553.500" y="388.500" width="14" height="18" fill="#e8e6e0" stroke="#808080" stroke-width=".6"/><rect x="1555" y="389" width="11" height="9" fill="#000"/><rect x="1557.500" y="392" width="6" height="2.500" fill="#fff"/><path d="M1555.500 405 h10 l-5 -4.500z" fill="#000"/><path d="M1584 389 L1591.5 397.500 L1584 406 Z" fill="#000"/><rect x="1578.500" y="392.500" width="6" height="10" fill="#cfe0ff" stroke="#1a3a8a" stroke-width="1"/><path d="M1580 395.500 h3 M1580 397.500 h3 M1580 399.500 h3" stroke="#1a3a8a" stroke-width=".7"/></svg>
<div class="abs" style="left:1369px;top:412px;width:211px;height:123px;background:#fff;overflow:hidden"><div class="abs" style="left:1px;top:-40px;width:210px;height:63px;border:3px solid #0a246a"></div><div class="abs" style="left:4px;top:0;width:64px;height:20px;background:#a0a0a0;border-top:4px solid #000"></div><div class="abs" style="left:1px;top:27px;width:210px;height:70px;border:3px solid #0a246a"></div><div class="abs" style="left:4px;top:30px;width:64px;height:64px;background:#a0a0a0"></div><div class="t" style="left:72px;top:32px;letter-spacing:0.05px">Winter Solstice 08:00</div><div class="t" style="left:72px;top:45px;letter-spacing:-0.1px">Photo: <i style="color:#8a8a8a">None</i></div><div class="t" style="left:72px;top:58px;letter-spacing:-0.1px;color:#8a8a8a;font-style:italic">No Description</div><svg style="left:52px;top:78px" width="13" height="13" viewBox="0 0 13 13"><path d="M2 10.500 L10.500 2 L12 3.500 L3.500 12 Z" fill="#e01010" stroke="#500" stroke-width=".5"/><path d="M10.500 2 L11.300 1.200 L12.800 2.700 L12 3.500 Z" fill="#f4a0b8"/><path d="M0.800 12.500 L2 10.500 L3.500 12 Z" fill="#d8c080" stroke="#222" stroke-width=".4"/></svg><div class="abs" style="left:4px;top:104px;width:64px;height:17px;background:#a0a0a0"></div><div class="abs" style="left:4px;top:120px;width:64px;height:3px;background:#000"></div><div class="t" style="left:72px;top:106px;letter-spacing:0.05px">Spring Equinox 08:00</div><div class="t" style="left:72px;top:119px;letter-spacing:-0.1px">Photo: <i style="color:#8a8a8a">None</i></div></div>
<div class="abs" style="left:1368px;top:411px;width:230px;height:125px;border:1px solid;border-color:#808080 #fff #fff #808080;pointer-events:none"></div>
<div class="abs" style="left:1580px;top:412px;width:17px;height:123px;background-color:#fff;background-image:linear-gradient(45deg,#d4d0c8 25%,transparent 25%,transparent 75%,#d4d0c8 75%),linear-gradient(45deg,#d4d0c8 25%,transparent 25%,transparent 75%,#d4d0c8 75%);background-size:2px 2px;background-position:0 0,1px 1px"></div>
<div class="raised" style="left:1580px;top:412px;width:17px;height:17px"></div>
<div class="raised" style="left:1580px;top:446px;width:17px;height:16px"></div>
<div class="raised" style="left:1580px;top:518px;width:17px;height:17px"></div>
<svg style="left:1580px;top:412px" width="17" height="123"><path d="M5 10 h7 l-3.500 -3.500z M5 111 h7 l-3.500 3.500z" fill="#000"/></svg>
<div class="cb" style="left:1441px;top:547px"><svg style="left:1px;top:1px" width="10" height="10" viewBox="0 0 10 10"><path d="M0.800 3.600 L3.500 6.300 L9.200 0.600 L9.200 3.400 L3.500 9.100 L0.800 6.400 Z" fill="#000"/></svg></div>
<div class="t" style="left:1459px;top:549px;"><u>I</u>nclude in animation</div>
<div class="t" style="left:1380px;top:574px;width:55px;text-align:right">Name:</div>
<div class="sunken" style="left:1441px;top:566px;width:152px;height:19px"></div>
<div class="t" style="left:1445px;top:570px;">Winter Solstice 08:00</div>
<div class="t" style="left:1370px;top:595px;width:65px;text-align:right">Description:</div>
<div class="sunken" style="left:1441px;top:589px;width:152px;height:19px"></div>
<div class="t" style="left:1376px;top:614px;width:60px;text-align:right">Properties</div>
<div class="t" style="left:1376px;top:627px;width:60px;text-align:right">to save:</div>
<div class="cb" style="left:1439px;top:616px"><svg style="left:1px;top:1px" width="10" height="10" viewBox="0 0 10 10"><path d="M0.800 3.600 L3.500 6.300 L9.200 0.600 L9.200 3.400 L3.500 9.100 L0.800 6.400 Z" fill="#000"/></svg></div>
<div class="t" style="left:1458px;top:618px;">Camera Location</div>
<div class="cb" style="left:1439px;top:634px"><svg style="left:1px;top:1px" width="10" height="10" viewBox="0 0 10 10"><path d="M0.800 3.600 L3.500 6.300 L9.200 0.600 L9.200 3.400 L3.500 9.100 L0.800 6.400 Z" fill="#000"/></svg></div>
<div class="t" style="left:1458px;top:636px;">Hidden Geometry</div>
<div class="cb" style="left:1439px;top:652px"><svg style="left:1px;top:1px" width="10" height="10" viewBox="0 0 10 10"><path d="M0.800 3.600 L3.500 6.300 L9.200 0.600 L9.200 3.400 L3.500 9.100 L0.800 6.400 Z" fill="#000"/></svg></div>
<div class="t" style="left:1458px;top:654px;">Visible Layers</div>
<div class="cb" style="left:1439px;top:670px"><svg style="left:1px;top:1px" width="10" height="10" viewBox="0 0 10 10"><path d="M0.800 3.600 L3.500 6.300 L9.200 0.600 L9.200 3.400 L3.500 9.100 L0.800 6.400 Z" fill="#000"/></svg></div>
<div class="t" style="left:1458px;top:672px;">Active Section Planes</div>
<div class="cb" style="left:1439px;top:688px"><svg style="left:1px;top:1px" width="10" height="10" viewBox="0 0 10 10"><path d="M0.800 3.600 L3.500 6.300 L9.200 0.600 L9.200 3.400 L3.500 9.100 L0.800 6.400 Z" fill="#000"/></svg></div>
<div class="t" style="left:1458px;top:690px;">Style and Fog</div>
<div class="cb" style="left:1439px;top:706px"><svg style="left:1px;top:1px" width="10" height="10" viewBox="0 0 10 10"><path d="M0.800 3.600 L3.500 6.300 L9.200 0.600 L9.200 3.400 L3.500 9.100 L0.800 6.400 Z" fill="#000"/></svg></div>
<div class="t" style="left:1458px;top:708px;">Shadow Settings</div>
<div class="cb" style="left:1439px;top:724px"><svg style="left:1px;top:1px" width="10" height="10" viewBox="0 0 10 10"><path d="M0.800 3.600 L3.500 6.300 L9.200 0.600 L9.200 3.400 L3.500 9.100 L0.800 6.400 Z" fill="#000"/></svg></div>
<div class="t" style="left:1458px;top:726px;">Axes Location</div>
<div class="panel" style="left:1601px;top:129px;width:316px;height:948px"></div>
<div class="ptitle" style="left:1605px;top:133px;width:308px">Layers</div>
<div class="pclose" style="left:1899px;top:135px"><svg style="left:1px;top:1px" width="8" height="7" viewBox="0 0 8 7"><path d="M0.5 0.5 L7 6.5 M7 0.5 L0.5 6.5" stroke="#000" stroke-width="1.5"/></svg></div>
<svg style="left:1606px;top:150px" width="306" height="24" viewBox="1606 150 306 24"><circle cx="1618.500" cy="162.500" r="7.500" fill="none" stroke="#000" stroke-width="1.6"/><path d="M1614 162.500 h9 M1618.500 158 v9" stroke="#000" stroke-width="2.4"/><circle cx="1642.500" cy="162.500" r="7.500" fill="none" stroke="#000" stroke-width="1.6"/><path d="M1638 162.500 h9" stroke="#000" stroke-width="2.4"/><path d="M1900 153.500 L1907.500 162 L1900 170.500 Z" fill="#000"/><rect x="1894.500" y="157" width="6" height="10" fill="#cfe0ff" stroke="#1a3a8a" stroke-width="1"/><path d="M1896 160 h3 M1896 162 h3 M1896 164 h3" stroke="#1a3a8a" stroke-width=".7"/></svg>
<div class="abs" style="left:1605px;top:176px;width:308px;height:897px;background:#fff"></div>
<div class="abs" style="left:1605px;top:176px;width:218px;height:17px;background:#d4d0c8;border:1px solid;border-color:#fff #404040 #404040 #fff;box-shadow:inset -1px -1px 0 #808080"></div><div class="t" style="left:1612px;top:179px;">Name</div>
<div class="abs" style="left:1823px;top:176px;width:50px;height:17px;background:#d4d0c8;border:1px solid;border-color:#fff #404040 #404040 #fff;box-shadow:inset -1px -1px 0 #808080"></div><div class="t" style="left:1831px;top:179px;">Visible</div>
<div class="abs" style="left:1873px;top:176px;width:40px;height:17px;background:#d4d0c8;border:1px solid;border-color:#fff #404040 #404040 #fff;box-shadow:inset -1px -1px 0 #808080"></div><div class="t" style="left:1882px;top:179px;">C...</div>
<svg style="left:1655px;top:182px" width="9" height="8" viewBox="0 0 9 8"><path d="M0.500 0.500 H8 L4.200 7 Z" fill="#d4d0c8" stroke="#808080" stroke-width="1"/><path d="M8 0.500 L4.200 7" stroke="#fff" stroke-width="1"/></svg>
<svg style="left:1605px;top:193px" width="30" height="310" viewBox="0 0 30 310"><circle cx="9.500" cy="9" r="5.800" fill="#fff" stroke="#000" stroke-width="1"/><path d="M9.500 6 l3 3 l-3 3 l-3 -3z" fill="#000"/><circle cx="9.500" cy="26" r="5.800" fill="#fff" stroke="#000" stroke-width="1"/><circle cx="9.500" cy="43" r="5.800" fill="#fff" stroke="#000" stroke-width="1"/><circle cx="9.500" cy="60" r="5.800" fill="#fff" stroke="#000" stroke-width="1"/><circle cx="9.500" cy="77" r="5.800" fill="#fff" stroke="#000" stroke-width="1"/><circle cx="9.500" cy="94" r="5.800" fill="#fff" stroke="#000" stroke-width="1"/><circle cx="9.500" cy="111" r="5.800" fill="#fff" stroke="#000" stroke-width="1"/><circle cx="9.500" cy="128" r="5.800" fill="#fff" stroke="#000" stroke-width="1"/><circle cx="9.500" cy="145" r="5.800" fill="#fff" stroke="#000" stroke-width="1"/><circle cx="9.500" cy="162" r="5.800" fill="#fff" stroke="#000" stroke-width="1"/><circle cx="9.500" cy="179" r="5.800" fill="#fff" stroke="#000" stroke-width="1"/><circle cx="9.500" cy="196" r="5.800" fill="#fff" stroke="#000" stroke-width="1"/><circle cx="9.500" cy="213" r="5.800" fill="#fff" stroke="#000" stroke-width="1"/><circle cx="9.500" cy="230" r="5.800" fill="#fff" stroke="#000" stroke-width="1"/><circle cx="9.500" cy="247" r="5.800" fill="#fff" stroke="#000" stroke-width="1"/><circle cx="9.500" cy="264" r="5.800" fill="#fff" stroke="#000" stroke-width="1"/><circle cx="9.500" cy="281" r="5.800" fill="#fff" stroke="#000" stroke-width="1"/><circle cx="9.500" cy="298" r="5.800" fill="#fff" stroke="#000" stroke-width="1"/></svg>
<div class="t" style="left:1624px;top:196px;">Layer0</div>
<div class="cb2" style="left:1842px;top:196px"><svg style="left:1px;top:1px" width="10" height="10" viewBox="0 0 10 10"><path d="M0.800 3.600 L3.500 6.300 L9.200 0.600 L9.200 3.400 L3.500 9.100 L0.800 6.400 Z" fill="#000"/></svg></div>
<div class="abs" style="left:1885px;top:194px;width:15px;height:15px;background:#0a68a0"></div>
<div class="t" style="left:1624px;top:213px;">2D Existing trees and shrubs</div>
<div class="cb2" style="left:1842px;top:213px"><svg style="left:1px;top:1px" width="10" height="10" viewBox="0 0 10 10"><path d="M0.800 3.600 L3.500 6.300 L9.200 0.600 L9.200 3.400 L3.500 9.100 L0.800 6.400 Z" fill="#000"/></svg></div>
<div class="abs" style="left:1885px;top:211px;width:15px;height:15px;background:#991111"></div>
<div class="t" style="left:1624px;top:230px;">2D Phase 1 new trees and shrubs</div>
<div class="cb2" style="left:1842px;top:230px"></div>
<div class="abs" style="left:1885px;top:228px;width:15px;height:15px;background:#009988"></div>
<div class="t" style="left:1624px;top:247px;">2D Phase 2 new trees and shrubs</div>
<div class="cb2" style="left:1842px;top:247px"></div>
<div class="abs" style="left:1885px;top:245px;width:15px;height:15px;background:#004f8f"></div>
<div class="t" style="left:1624px;top:264px;">Key</div>
<div class="cb2" style="left:1842px;top:264px"></div>
<div class="abs" style="left:1885px;top:262px;width:15px;height:15px;background:#cc4400"></div>
<div class="t" style="left:1624px;top:281px;">Layer1</div>
<div class="cb2" style="left:1842px;top:281px"></div>
<div class="abs" style="left:1885px;top:279px;width:15px;height:15px;background:#664400"></div>
<div class="t" style="left:1624px;top:298px;">New beds</div>
<div class="cb2" style="left:1842px;top:298px"></div>
<div class="abs" style="left:1885px;top:296px;width:15px;height:15px;background:#664400"></div>
<div class="t" style="left:1624px;top:315px;">New Hugle bed</div>
<div class="cb2" style="left:1842px;top:315px"></div>
<div class="abs" style="left:1885px;top:313px;width:15px;height:15px;background:#7878a0"></div>
<div class="t" style="left:1624px;top:332px;">New Paths</div>
<div class="cb2" style="left:1842px;top:332px"></div>
<div class="abs" style="left:1885px;top:330px;width:15px;height:15px;background:#f0b078"></div>
<div class="t" style="left:1624px;top:349px;">New Phase 1 Labels</div>
<div class="cb2" style="left:1842px;top:349px"></div>
<div class="abs" style="left:1885px;top:347px;width:15px;height:15px;background:#aa4400"></div>
<div class="t" style="left:1624px;top:366px;">New Phase 2 labels</div>
<div class="cb2" style="left:1842px;top:366px"></div>
<div class="abs" style="left:1885px;top:364px;width:15px;height:15px;background:#7878a0"></div>
<div class="t" style="left:1624px;top:383px;">New Pond</div>
<div class="cb2" style="left:1842px;top:383px"></div>
<div class="abs" style="left:1885px;top:381px;width:15px;height:15px;background:#00ffff"></div>
<div class="t" style="left:1624px;top:400px;">New slug free planters</div>
<div class="cb2" style="left:1842px;top:400px"></div>
<div class="abs" style="left:1885px;top:398px;width:15px;height:15px;background:#009988"></div>
<div class="t" style="left:1624px;top:417px;">Old flower bed</div>
<div class="cb2" style="left:1842px;top:417px"></div>
<div class="abs" style="left:1885px;top:415px;width:15px;height:15px;background:#7878a0"></div>
<div class="t" style="left:1624px;top:434px;">Old Gate</div>
<div class="cb2" style="left:1842px;top:434px"><svg style="left:1px;top:1px" width="10" height="10" viewBox="0 0 10 10"><path d="M0.800 3.600 L3.500 6.300 L9.200 0.600 L9.200 3.400 L3.500 9.100 L0.800 6.400 Z" fill="#000"/></svg></div>
<div class="abs" style="left:1885px;top:432px;width:15px;height:15px;background:#664400"></div>
<div class="t" style="left:1624px;top:451px;">Old Labels</div>
<div class="cb2" style="left:1842px;top:451px"></div>
<div class="abs" style="left:1885px;top:449px;width:15px;height:15px;background:#009988"></div>
<div class="t" style="left:1624px;top:468px;">Old Lawn</div>
<div class="cb2" style="left:1842px;top:468px"></div>
<div class="abs" style="left:1885px;top:466px;width:15px;height:15px;background:#9900ff"></div>
<div class="t" style="left:1624px;top:485px;">Old Removble fence</div>
<div class="cb2" style="left:1842px;top:485px"><svg style="left:1px;top:1px" width="10" height="10" viewBox="0 0 10 10"><path d="M0.800 3.600 L3.500 6.300 L9.200 0.600 L9.200 3.400 L3.500 9.100 L0.800 6.400 Z" fill="#000"/></svg></div>
<div class="abs" style="left:1885px;top:483px;width:15px;height:15px;background:#7878a0"></div>
<div class="abs" style="left:0;top:1152px;width:1920px;height:28px;background:#d4d0c8;border-top:1px solid #fff"></div>
<svg style="left:0;top:1154px" width="130" height="26" viewBox="0 1154 130 26"><circle cx="13" cy="1167" r="8.500" fill="#f3e7cf" stroke="#7a4a10" stroke-width="1.600"/><circle cx="41" cy="1167" r="8.500" fill="#f3e7cf" stroke="#7a4a10" stroke-width="1.600"/><circle cx="69" cy="1167" r="8.500" fill="#f3e7cf" stroke="#7a4a10" stroke-width="1.600"/><circle cx="13" cy="1164.500" r="3" fill="#e04040" stroke="#802020" stroke-width=".6"/><path d="M13 1167.500 V1173" stroke="#555" stroke-width="1.200"/><circle cx="41" cy="1162.500" r="1.600" fill="#222"/><path d="M39 1165 h4 l-.5 4 h-1 l-.3 3.500 h-.6 l-.3 -3.500 h-1z" fill="#222"/><path d="M72.500 1164 A4.500 4.500 0 1 0 72.500 1170" fill="none" stroke="#b0a080" stroke-width="1.600"/><path d="M90.500 1156 V1178" stroke="#808080"/><path d="M91.500 1156 V1178" stroke="#fff"/><circle cx="107" cy="1167" r="9" fill="#fff" stroke="#1a4a9a" stroke-width="2"/><text x="107" y="1172" font-size="14" font-weight="bold" text-anchor="middle" fill="#000" style="letter-spacing:0">?</text></svg>
<div class="t" style="left:124px;top:1161px;font-size:13px;line-height:15px;height:15px;letter-spacing:0">Select objects. Shift to extend select. Drag mouse to select multiple.</div>
<div class="abs" style="left:1575px;top:1156px;width:2px;height:22px;border-left:1px solid #808080;border-right:1px solid #fff"></div>
<div class="t" style="left:1625px;top:1161px;font-size:13px;line-height:15px;height:15px;letter-spacing:0">Measurements</div>
<div class="abs" style="left:1714px;top:1157px;width:206px;height:23px;border:1px solid;border-color:#808080 #fff #fff #808080"></div>
<svg style="left:1906px;top:1166px" width="14" height="14"><path d="M13 3 L3 13 M13 7 L7 13 M13 11 L11 13" stroke="#808080" stroke-width="1"/><path d="M14 3 L4 13 M14 7 L8 13 M14 11 L12 13" stroke="#fff" stroke-width="1"/></svg>
</div>
</body></html>
